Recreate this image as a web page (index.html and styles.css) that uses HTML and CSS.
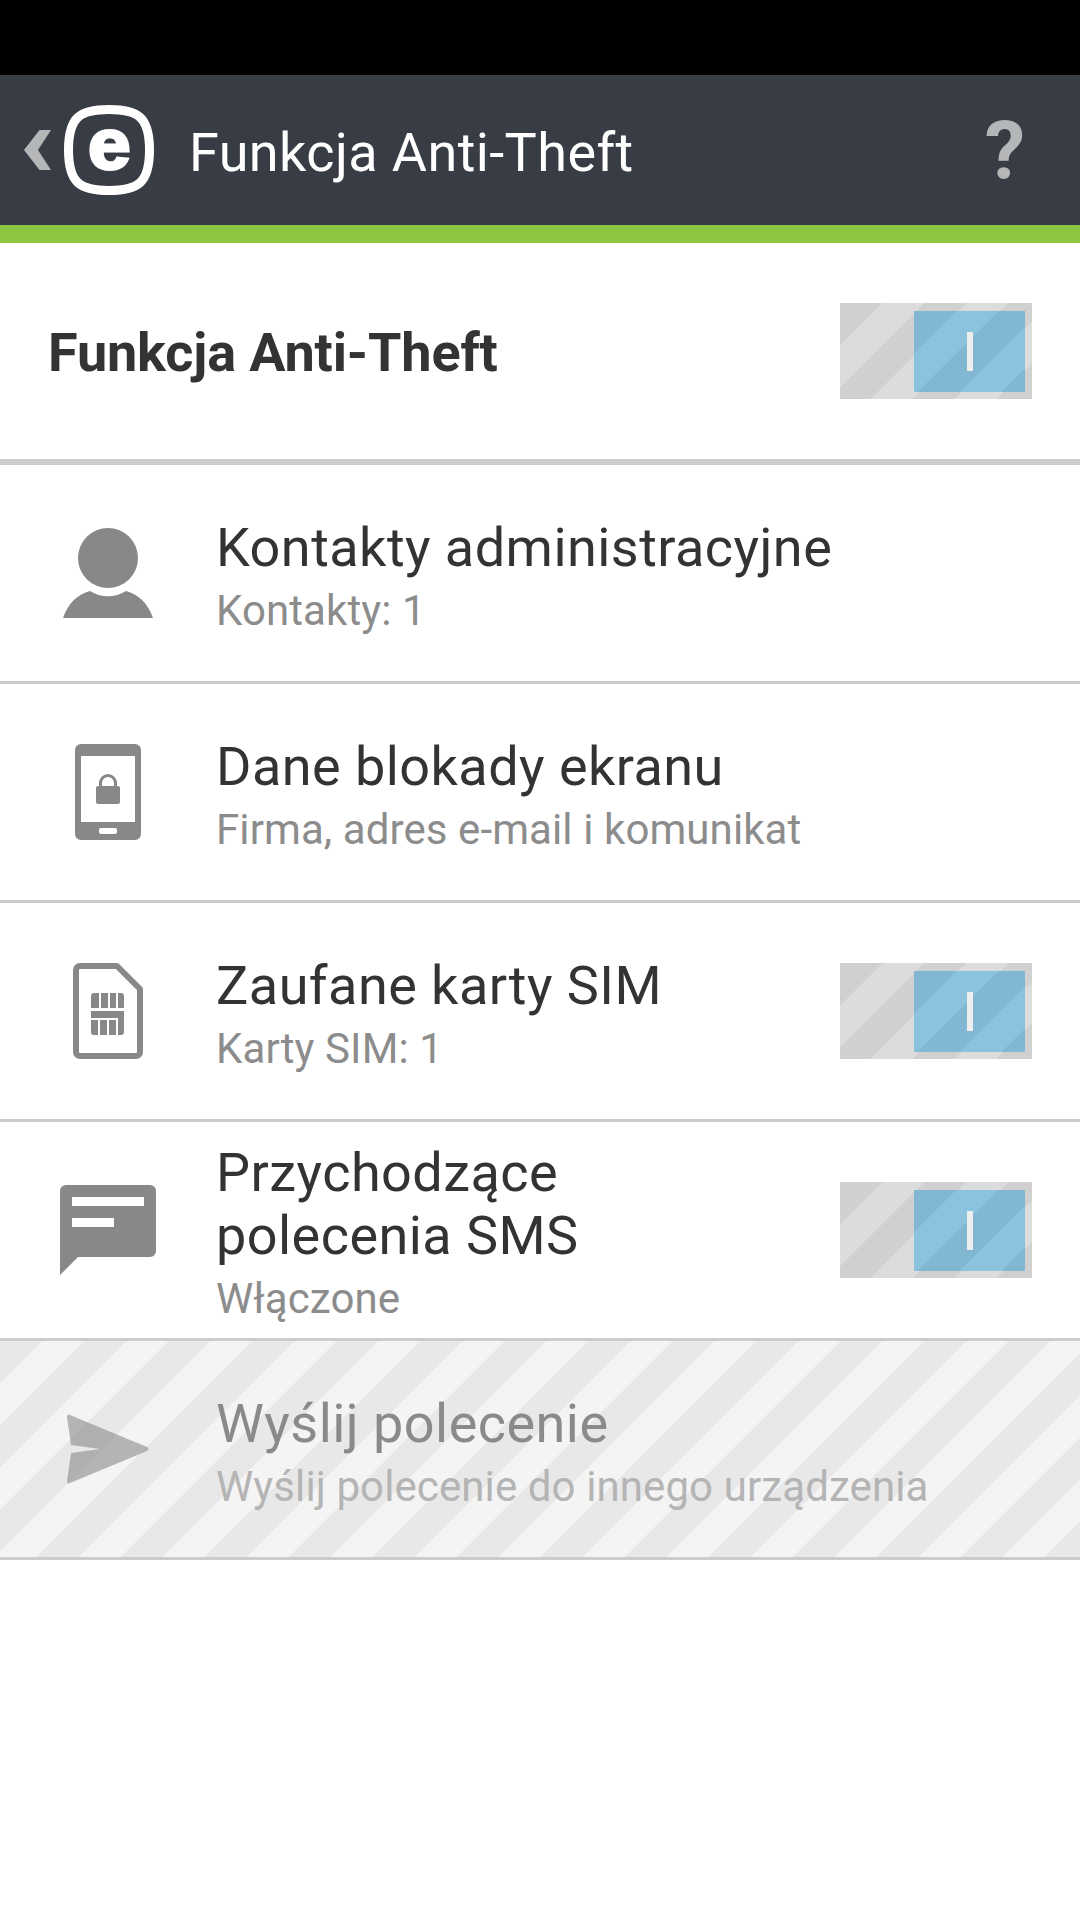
FILE: index.html
```html
<!DOCTYPE html>
<html lang="pl">
<head>
<meta charset="utf-8">
<title>Funkcja Anti-Theft</title>
<link rel="stylesheet" href="styles.css">
</head>
<body>
<div class="status"></div>
<header class="bar">
  <svg class="back" width="28" height="42" viewBox="0 0 28 42"><polygon points="27,1 15.500,1 0,21 15.500,41 27,41 14,21" fill="#b4b6b8"/></svg>
  <div class="logo">
    <svg class="logo-ring" width="90" height="90" viewBox="0 0 90 90">
      <path d="M45 4.500C16 4.500 4.500 12 4.500 45C4.500 78 16 85.500 45 85.500C74 85.500 85.500 78 85.500 45C85.500 12 74 4.500 45 4.500Z" fill="none" stroke="#fff" stroke-width="9"/>
    </svg>
    <span class="logo-e">e</span>
  </div>
  <h1 class="bar-title">Funkcja Anti-Theft</h1>
  <span class="help">?</span>
</header>
<div class="accent"></div>
<section class="master">
  <h2 class="master-title">Funkcja Anti-Theft</h2>
  <div class="toggle"><div class="knob"><span class="knob-mark"></span></div></div>
</section>
<ul class="list">
  <li class="row">
    <div class="icon-cell">
      <svg width="90" height="90" viewBox="0 0 90 90" fill="#888"><circle cx="45" cy="30" r="30"/><path d="M0 90C5 75 15 66 27 63C38 70 52 70 63 63C75 66 85 75 90 90Z"/></svg>
    </div>
    <div class="texts"><div class="title">Kontakty administracyjne</div><div class="sub">Kontakty: 1</div></div>
  </li>
  <li class="row">
    <div class="icon-cell">
      <svg width="66" height="96" viewBox="0 0 66 96" fill="#888"><path fill-rule="evenodd" d="M6 0H60A6 6 0 0 1 66 6V90A6 6 0 0 1 60 96H6A6 6 0 0 1 0 90V6A6 6 0 0 1 6 0ZM6 12V78H60V12ZM26 84A2 2 0 0 0 24 86V88A2 2 0 0 0 26 90H40A2 2 0 0 0 42 88V86A2 2 0 0 0 40 84Z"/><path d="M23 42H24V39A9 9 0 0 1 42 39V42H43A2 2 0 0 1 45 44V58A2 2 0 0 1 43 60H23A2 2 0 0 1 21 58V44A2 2 0 0 1 23 42ZM27 42H39V39A6 6 0 0 0 27 39Z" fill-rule="evenodd"/></svg>
    </div>
    <div class="texts"><div class="title">Dane blokady ekranu</div><div class="sub">Firma, adres e-mail i komunikat</div></div>
  </li>
  <li class="row">
    <div class="icon-cell">
      <svg width="70" height="96" viewBox="0 0 70 96" fill="#888"><path d="M7 3H44L67 26V89A4 4 0 0 1 63 93H7A4 4 0 0 1 3 89V7A4 4 0 0 1 7 3Z" fill="none" stroke="#888" stroke-width="6" stroke-linejoin="round"/><path d="M21 30H26V45H18V33A3 3 0 0 1 21 30ZM28 30H35V45H28ZM37 30H43V45H37ZM45 30H48A3 3 0 0 1 51 33V45H45ZM18 48H51V69A3 3 0 0 1 48 72H45V55H18ZM18 57H25V72H21A3 3 0 0 1 18 69ZM27 57H34V72H27ZM36 57H43V72H36Z"/></svg>
    </div>
    <div class="texts"><div class="title">Zaufane karty SIM</div><div class="sub">Karty SIM: 1</div></div>
    <div class="toggle"><div class="knob"><span class="knob-mark"></span></div></div>
  </li>
  <li class="row">
    <div class="icon-cell">
      <svg width="96" height="90" viewBox="0 0 96 90" fill="#888"><path fill-rule="evenodd" d="M6 0H90A6 6 0 0 1 96 6V66A6 6 0 0 1 90 72H18L0 90V6A6 6 0 0 1 6 0ZM12 12V21H84V12ZM12 33V42H54V33Z"/></svg>
    </div>
    <div class="texts"><div class="title">Przychodzące<br>polecenia SMS</div><div class="sub">Włączone</div></div>
    <div class="toggle"><div class="knob"><span class="knob-mark"></span></div></div>
  </li>
  <li class="row row-off">
    <div class="icon-cell">
      <svg width="84" height="70" viewBox="0 0 84 70"><path d="M4 1L81 33C83 34 83 36 81 37L4 69C2.500 70 1 69 1 67L5 39L34 35L5 31L1 3C1 1 2.500 0 4 1Z" fill="#888" opacity=".6"/></svg>
    </div>
    <div class="texts"><div class="title">Wyślij polecenie</div><div class="sub">Wyślij polecenie do innego urządzenia</div></div>
  </li>
</ul>
</body>
</html>
```
FILE: styles.css
```css
* { box-sizing: border-box; }
html, body { margin: 0; padding: 0; }
body { width: 1080px; height: 1920px; background: #fff; font-family: Roboto, "Noto Sans", sans-serif; overflow: hidden; }
.status { height: 75px; background: #000; }
.bar { height: 150px; background: #383c44; display: flex; align-items: center; padding-right: 55px; }
.back { margin-left: 24px; margin-right: 12px; flex: none; }
.logo { flex: none; width: 90px; height: 90px; display: grid; justify-items: center; align-items: start; }
.logo-ring, .logo-e { grid-area: 1 / 1; }
.logo-e { margin-top: 2px; font-family: "Liberation Sans", sans-serif; font-weight: 700; font-size: 73px; line-height: 1; color: #fff; -webkit-text-stroke: 3px #fff; transform: scaleX(1.05); }
.bar-title { margin: 4px 0 0 35px; flex: 1; font-size: 54px; font-weight: 400; letter-spacing: .4px; color: #fff; }
.help { margin-top: 2px; font-size: 81px; font-weight: 700; color: #b4b6b8; line-height: 1; }
.accent { height: 18px; background: #8dc741; }
.master { height: 222px; border-bottom: 6px solid #ccc; display: flex; align-items: center; justify-content: space-between; padding: 0 48px; }
.master-title { margin: 2px 0 0; font-size: 54px; font-weight: 700; letter-spacing: -.15px; color: #333; }
.toggle { flex: none; width: 192px; height: 96px; padding: 8px 7px 7px 74px; background: repeating-linear-gradient(135deg, #d0d0d0 0, #d0d0d0 29.700px, #dcdcdc 29.700px, #dcdcdc 59.400px); }
.row .toggle { margin-right: 48px; }
.knob { height: 100%; background: repeating-linear-gradient(135deg, #82b7d4 0, #82b7d4 29.700px, #8bc2de 29.700px, #8bc2de 59.400px); display: flex; align-items: center; justify-content: center; }
.knob-mark { width: 6px; height: 39px; background: #eee; }
.list { list-style: none; margin: 0; padding: 0; }
.row { height: 219px; border-bottom: 3px solid #ccc; display: flex; align-items: center; }
.icon-cell { flex: none; width: 216px; display: flex; justify-content: center; }
.texts { flex: 1; min-width: 0; padding-top: 11px; }
.title { font-size: 54px; line-height: 63px; letter-spacing: .45px; color: #333; }
.sub { font-size: 42px; line-height: 63px; letter-spacing: .1px; color: #8c8c8c; }
.row-off { background: repeating-linear-gradient(135deg, #e8e8e8 0, #e8e8e8 29.700px, #f4f4f4 29.700px, #f4f4f4 59.400px); }
.row-off .title { color: #8a8a8a; }
.row-off .sub { color: #b4b4b4; }
```
